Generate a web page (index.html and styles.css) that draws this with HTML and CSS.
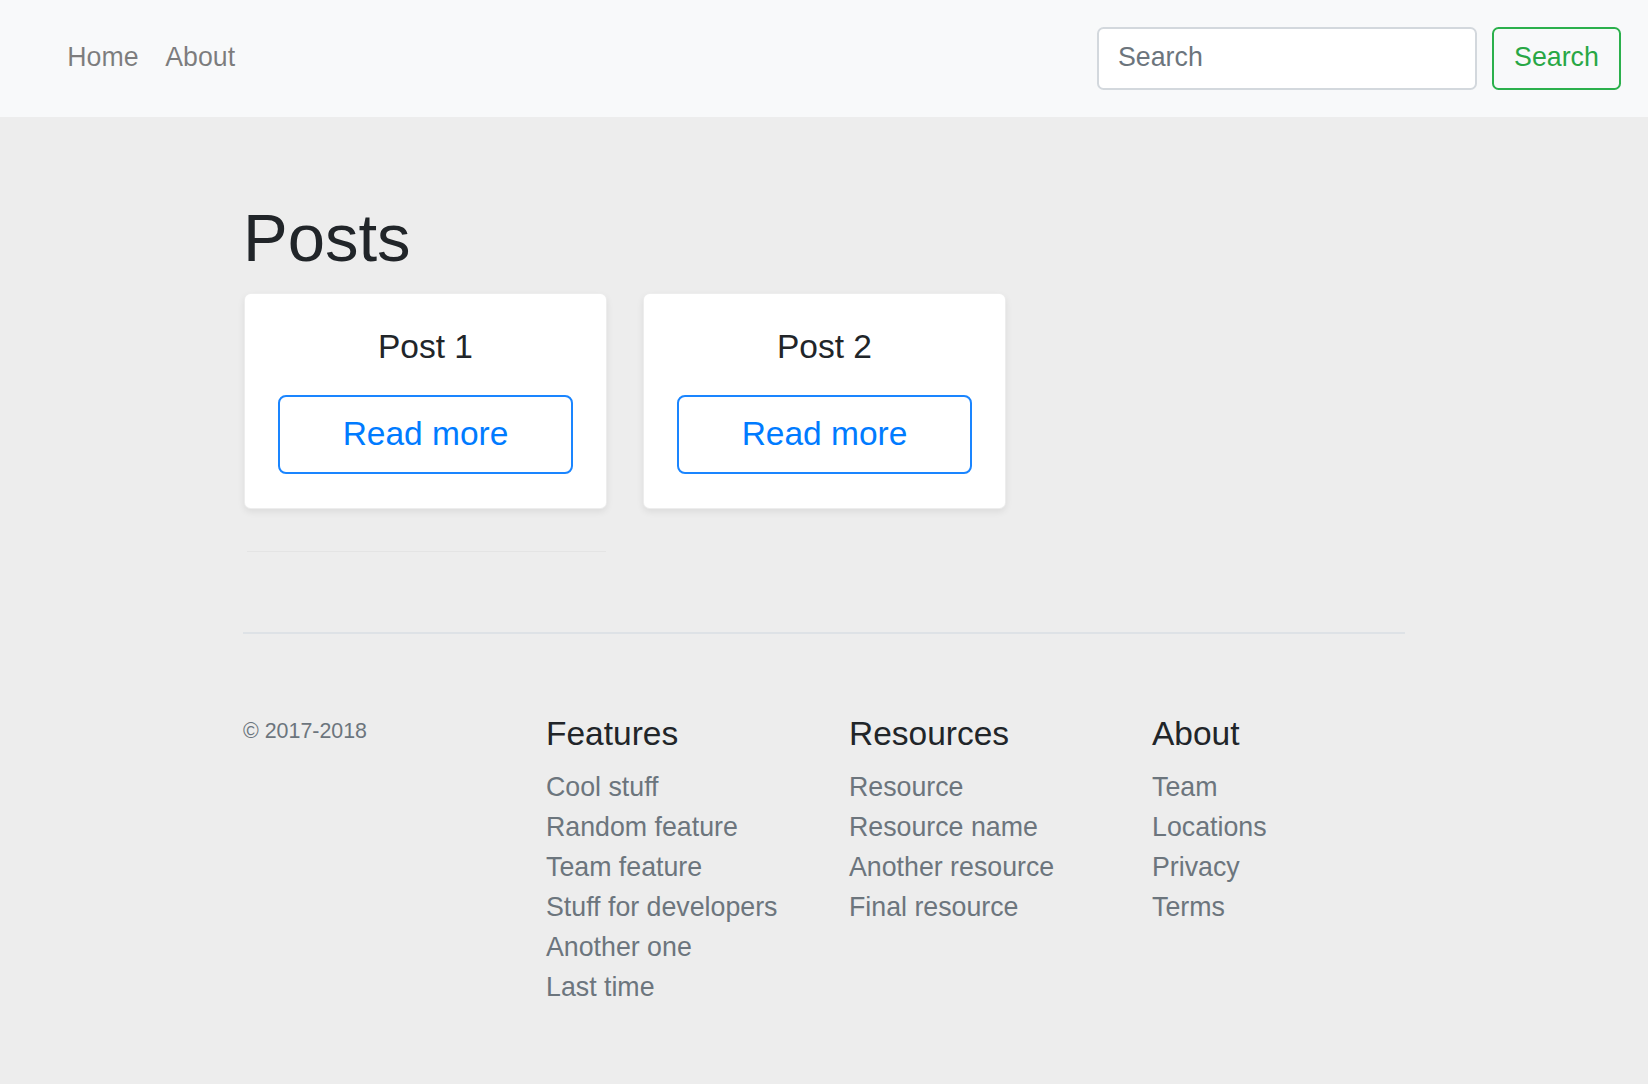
FILE: index.html
```html
<!DOCTYPE html>
<html lang="en">
<head>
<meta charset="utf-8">
<title>Posts</title>
<link rel="stylesheet" href="styles.css">
</head>
<body>
<nav class="navbar">
  <div class="nav-links">
    <a class="nav-link" href="#">Home</a>
    <a class="nav-link" href="#">About</a>
  </div>
  <form class="search-form">
    <input class="search-input" type="text" placeholder="Search">
    <button class="search-btn" type="button">Search</button>
  </form>
</nav>

<main class="container">
  <h1 class="page-title">Posts</h1>
  <div class="cards">
    <div class="card">
      <h5 class="card-title">Post 1</h5>
      <button class="read-btn" type="button">Read more</button>
    </div>
    <div class="card">
      <h5 class="card-title">Post 2</h5>
      <button class="read-btn" type="button">Read more</button>
    </div>
  </div>
  <div class="faint-rule"></div>

  <footer class="footer">
    <div class="footer-row">
      <div class="footer-col">
        <small class="copyright">© 2017-2018</small>
      </div>
      <div class="footer-col">
        <h5 class="footer-title">Features</h5>
        <ul class="footer-list">
          <li><a href="#">Cool stuff</a></li>
          <li><a href="#">Random feature</a></li>
          <li><a href="#">Team feature</a></li>
          <li><a href="#">Stuff for developers</a></li>
          <li><a href="#">Another one</a></li>
          <li><a href="#">Last time</a></li>
        </ul>
      </div>
      <div class="footer-col">
        <h5 class="footer-title">Resources</h5>
        <ul class="footer-list">
          <li><a href="#">Resource</a></li>
          <li><a href="#">Resource name</a></li>
          <li><a href="#">Another resource</a></li>
          <li><a href="#">Final resource</a></li>
        </ul>
      </div>
      <div class="footer-col">
        <h5 class="footer-title">About</h5>
        <ul class="footer-list">
          <li><a href="#">Team</a></li>
          <li><a href="#">Locations</a></li>
          <li><a href="#">Privacy</a></li>
          <li><a href="#">Terms</a></li>
        </ul>
      </div>
    </div>
  </footer>
</main>
</body>
</html>
```
FILE: styles.css
```css
* { box-sizing: border-box; }

html, body {
  margin: 0;
  padding: 0;
}

body {
  background: #ededed;
  font-family: "Liberation Sans", Arial, Helvetica, sans-serif;
  font-size: 26.75px;
  line-height: 1.5;
  color: #212529;
}

a { text-decoration: none; }

/* Navbar */
.navbar {
  background: #f8f9fa;
  height: 117px;
  display: flex;
  align-items: center;
  justify-content: space-between;
  padding: 0 27px 0 54px;
}

.nav-links {
  display: flex;
  padding-bottom: 4px;
}

.nav-link {
  color: rgba(0, 0, 0, 0.5);
  padding: 0 13.3px;
  line-height: 40px;
}

.search-form {
  display: flex;
  align-items: center;
  gap: 15px;
}

.search-input {
  width: 380px;
  height: 63px;
  border: 2px solid #d3d8dd;
  border-radius: 6.6px;
  background: #fff;
  padding: 0 19px 2px;
  font-family: inherit;
  font-size: 26.75px;
  color: #495057;
  outline: none;
}

.search-input::placeholder {
  color: #6c757d;
  opacity: 1;
}

.search-btn {
  width: 129px;
  height: 63px;
  border: 2px solid #2bb04c;
  border-radius: 6.6px;
  background: transparent;
  color: #28a745;
  font-family: inherit;
  font-size: 26.75px;
  padding: 0 0 2px;
}

/* Main */
.container {
  width: 1162px;
  margin: 0 auto;
}

.page-title {
  font-size: 67px;
  font-weight: 400;
  line-height: 1.2;
  margin: 81px 0 15px;
}

.cards {
  display: flex;
  gap: 36px;
  padding-left: 1px;
}

.card {
  width: 363px;
  height: 216px;
  background: #fff;
  border: 1px solid rgba(0, 0, 0, 0.07);
  border-radius: 6.6px;
  box-shadow: 0 3px 7px rgba(0, 0, 0, 0.075);
  padding: 33px 33px 33px;
  display: flex;
  flex-direction: column;
}

.card-title {
  font-size: 33.5px;
  font-weight: 400;
  line-height: 1.2;
  text-align: center;
  margin: 0 0 27px;
}

.read-btn {
  width: 100%;
  height: 79px;
  flex: none;
  border: 2px solid #1a85ff;
  border-radius: 8px;
  background: transparent;
  color: #007bff;
  font-family: inherit;
  font-size: 33.5px;
  padding: 0;
}

.faint-rule {
  width: 359px;
  height: 1px;
  margin: 42px 0 0 4px;
  background: #e4e4e4;
}

/* Footer */
.footer {
  margin-top: 80px;
  border-top: 2px solid #dee2e6;
  padding-top: 80px;
  padding-bottom: 80px;
}

.footer-row {
  display: flex;
  margin: 0 -25px;
}

.footer-col {
  flex: 1 1 0;
  padding: 0 25px;
}

.copyright {
  display: block;
  font-size: 21.4px;
  line-height: 32px;
  color: #6c757d;
  padding-top: 1px;
}

.footer-title {
  font-size: 33.5px;
  font-weight: 400;
  line-height: 1.2;
  margin: 0 0 12px;
  color: #212529;
}

.footer-list {
  list-style: none;
  margin: 0;
  padding: 0;
}

.footer-list li {
  line-height: 40px;
}

.footer-list a {
  color: #6c757d;
}
```
